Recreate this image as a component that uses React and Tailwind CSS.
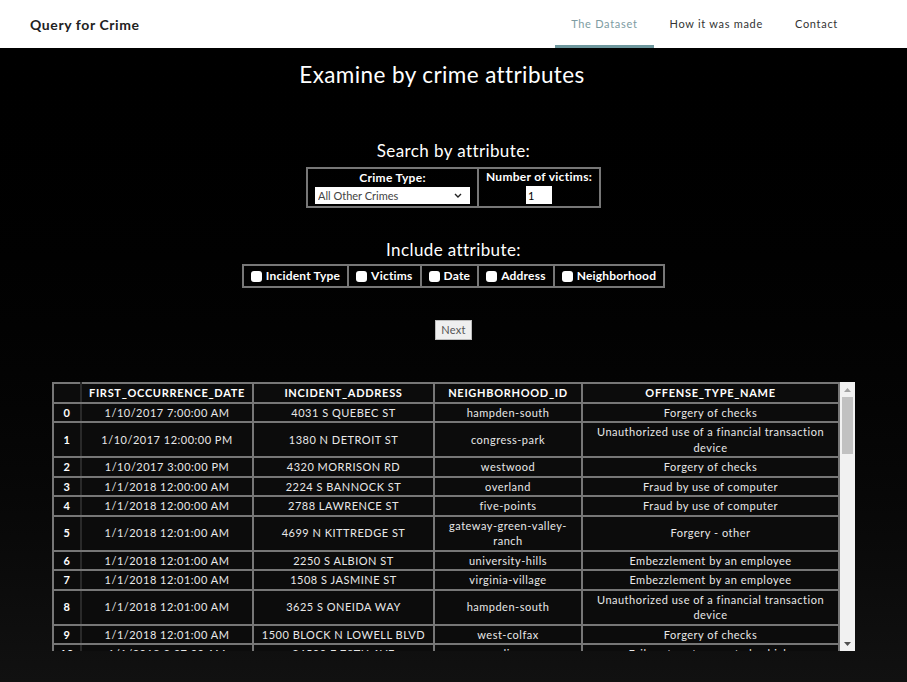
import { useState } from 'react'

const rows = [
  ['0', '1/10/2017 7:00:00 AM', '4031 S QUEBEC ST', 'hampden-south', 'Forgery of checks'],
  ['1', '1/10/2017 12:00:00 PM', '1380 N DETROIT ST', 'congress-park', 'Unauthorized use of a financial transaction device'],
  ['2', '1/10/2017 3:00:00 PM', '4320 MORRISON RD', 'westwood', 'Forgery of checks'],
  ['3', '1/1/2018 12:00:00 AM', '2224 S BANNOCK ST', 'overland', 'Fraud by use of computer'],
  ['4', '1/1/2018 12:00:00 AM', '2788 LAWRENCE ST', 'five-points', 'Fraud by use of computer'],
  ['5', '1/1/2018 12:01:00 AM', '4699 N KITTREDGE ST', 'gateway-green-valley-ranch', 'Forgery - other'],
  ['6', '1/1/2018 12:01:00 AM', '2250 S ALBION ST', 'university-hills', 'Embezzlement by an employee'],
  ['7', '1/1/2018 12:01:00 AM', '1508 S JASMINE ST', 'virginia-village', 'Embezzlement by an employee'],
  ['8', '1/1/2018 12:01:00 AM', '3625 S ONEIDA WAY', 'hampden-south', 'Unauthorized use of a financial transaction device'],
  ['9', '1/1/2018 12:01:00 AM', '1500 BLOCK N LOWELL BLVD', 'west-colfax', 'Forgery of checks'],
  ['10', '1/1/2018 3:37:00 AM', '24500 E 78TH AVE', 'dia', 'Failure to return rented vehicle'],
  ['11', '1/1/2018 8:00:00 AM', '1100 BROADWAY', 'civic-center', 'Fraud by use of computer'],
  ['12', '1/1/2018 9:00:00 AM', '3100 S SHERIDAN BLVD', 'bear-valley', 'Forgery of checks'],
]

const attrs = ['Incident Type', 'Victims', 'Date', 'Address', 'Neighborhood']

export default function App() {
  const [crime, setCrime] = useState('All Other Crimes')
  const [victims, setVictims] = useState('1')
  const [checked, setChecked] = useState({})

  return (
    <div className="min-h-[682px] bg-gradient-to-b from-black to-[#111111] text-white font-['Lato',sans-serif] pb-[30px]">
      <nav className="h-12 bg-white flex items-stretch justify-between pl-[30px] pr-[69px]">
        <div className="flex items-center text-[14px] font-bold text-[#222] tracking-[0.6px]">Query for Crime</div>
        <div className="flex items-stretch text-[11px] tracking-[0.7px]">
          <a className="flex items-center px-4 text-[#7d9ca2] border-b-[3px] border-[#6d979d] pt-[3px]">The Dataset</a>
          <a className="flex items-center px-4 text-[#333]">How it was made</a>
          <a className="flex items-center pl-4 text-[#333]">Contact</a>
        </div>
      </nav>

      <h1 className="text-center text-[22.5px] mt-[13px] leading-[28px] tracking-[0.4px] pr-[23px]">Examine by crime attributes</h1>

      <h2 className="text-center text-[17px] mt-[51px] leading-[22px] tracking-[0.4px]">Search by attribute:</h2>
      <div className="flex justify-center mt-[5px]">
        <table className="border-2 border-[#777] border-collapse">
          <tbody>
            <tr>
              <td className="border-2 border-[#777] px-[7px] pt-[2px] pb-[2px] text-center w-[171px] align-top">
                <div className="text-[12px] font-bold leading-[14px] tracking-[0.3px]">Crime Type:</div>
                <div className="relative mt-[2px]">
                  <select
                    value={crime}
                    onChange={e => setCrime(e.target.value)}
                    className="block appearance-none w-[155px] h-[17px] bg-white text-[#444] text-[11px] pl-[3px] leading-[17px] outline-none rounded-none"
                  >
                    <option>All Other Crimes</option>
                    <option>Larceny</option>
                    <option>Burglary</option>
                  </select>
                  <svg className="absolute right-[8px] top-[6px] pointer-events-none" width="8" height="5" viewBox="0 0 8 5">
                    <path d="M1 1l3 3 3-3" fill="none" stroke="#222" strokeWidth="1.4" />
                  </svg>
                </div>
              </td>
              <td className="border-2 border-[#777] px-[6px] pt-[1px] pb-[2px] text-center w-[122px] align-top">
                <div className="text-[12px] font-bold leading-[14px] tracking-[0.3px]">Number of victims:</div>
                <input
                  value={victims}
                  onChange={e => setVictims(e.target.value)}
                  className="block mx-auto mt-[2px] w-[26px] h-[18px] bg-white text-black text-[11px] pl-[2px] outline-none"
                />
              </td>
            </tr>
          </tbody>
        </table>
      </div>

      <h2 className="text-center text-[17px] mt-[31px] leading-[22px] tracking-[0.4px]">Include attribute:</h2>
      <div className="flex justify-center mt-[3px]">
        <table className="border-2 border-[#777] border-collapse">
          <tbody>
            <tr>
              {attrs.map(a => (
                <td key={a} className="border-2 border-[#777] px-[7px] h-[22px]">
                  <label className="flex items-center gap-[4px] text-[12px] font-bold tracking-[0.2px]">
                    <input
                      type="checkbox"
                      checked={!!checked[a]}
                      onChange={() => setChecked(c => ({ ...c, [a]: !c[a] }))}
                      className="appearance-none w-[11px] h-[11px] bg-white rounded-[3px] checked:bg-[#4a90d9]"
                    />
                    {a}
                  </label>
                </td>
              ))}
            </tr>
          </tbody>
        </table>
      </div>

      <div className="flex justify-center mt-[32px]">
        <button className="h-[20px] px-[5px] bg-[#efefef] border border-[#bbb] text-[#555] text-[11px] tracking-[0.3px]">Next</button>
      </div>

      <div className="w-[803px] mx-auto mt-[42px] h-[269px] flex">
        <div className="w-[788px] overflow-hidden">
          <table className="w-[788px] border-collapse border-2 border-[#777] text-[11px] text-[#e8e8e8] text-center leading-[15.5px] tracking-[0.5px]">
            <thead>
              <tr className="bg-[#0c0c0c] tracking-[0.7px]">
                <th className="border-2 border-[#777] border-r-[#2a2a2a] w-[28px] py-[1px]"></th>
                <th className="border-2 border-[#777] w-[172px] py-[1px] font-bold text-white">FIRST_OCCURRENCE_DATE</th>
                <th className="border-2 border-[#777] w-[181px] py-[1px] font-bold text-white">INCIDENT_ADDRESS</th>
                <th className="border-2 border-[#777] w-[148px] py-[1px] font-bold text-white">NEIGHBORHOOD_ID</th>
                <th className="border-2 border-[#777] py-[1px] font-bold text-white">OFFENSE_TYPE_NAME</th>
              </tr>
            </thead>
            <tbody>
              {rows.map(r => (
                <tr key={r[0]} className="bg-[#0c0c0c]">
                  <th className="border-2 border-[#777] border-r-[#2a2a2a] py-[1px] font-bold text-white">{r[0]}</th>
                  <td className="border-2 border-[#777] py-[1px] px-[4px]">{r[1]}</td>
                  <td className="border-2 border-[#777] py-[1px] px-[4px]">{r[2]}</td>
                  <td className="border-2 border-[#777] py-[1px] px-[8px]">{r[3]}</td>
                  <td className="border-2 border-[#777] py-[1px] px-[8px]">{r[4]}</td>
                </tr>
              ))}
            </tbody>
          </table>
        </div>
        <div className="w-[15px] bg-[#f1f1f1] flex flex-col items-center">
          <div className="h-[15px] flex items-center justify-center">
            <svg width="7" height="4" viewBox="0 0 7 4"><path d="M0 4L3.5 0L7 4Z" fill="#a3a3a3" /></svg>
          </div>
          <div className="w-[11px] h-[57px] bg-[#c1c1c1]" />
          <div className="flex-1" />
          <div className="h-[15px] flex items-center justify-center">
            <svg width="7" height="4" viewBox="0 0 7 4"><path d="M0 0L3.5 4L7 0Z" fill="#505050" /></svg>
          </div>
        </div>
      </div>
    </div>
  )
}
